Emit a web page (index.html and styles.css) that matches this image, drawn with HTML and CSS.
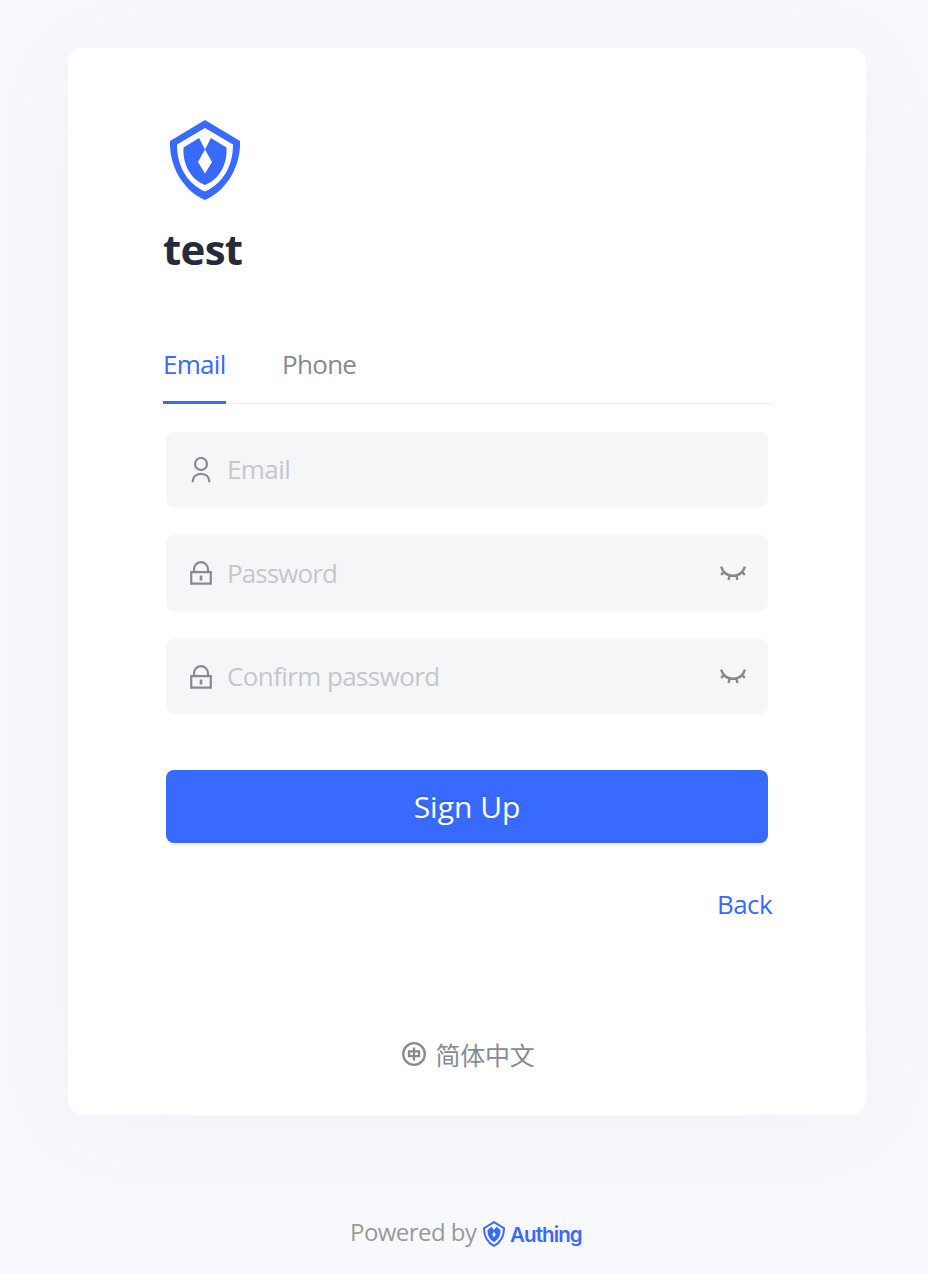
FILE: index.html
```html
<!DOCTYPE html>
<html lang="en">
<head>
<meta charset="utf-8">
<title>test</title>
<link rel="stylesheet" href="styles.css">
</head>
<body>
<svg class="sprite" aria-hidden="true">
  <symbol id="shield" viewBox="0 0 70 80">
    <path fill="currentColor" fill-rule="evenodd" d="M35 0 70 21C71 47 56 71 35 80 14 71-1 47 0 21ZM35 8 7 24.500C7 46 17 63.500 35 71.500 53 63.500 63 46 63 24.500Z"/>
    <path fill="currentColor" fill-rule="evenodd" d="M13.500 27.500 29 18 35 29.500 41 18 56.500 27.500C57.500 45 49 59.500 35 65 21 59.500 12.500 45 13.500 27.500ZM35 29.500 28 42 35 53.500 42 42Z"/>
  </symbol>
  <symbol id="lock" viewBox="0 0 22 24">
    <path fill="none" stroke="currentColor" stroke-width="2.200" d="M1.200 11.200H20.800V22.700H1.200ZM4 11V8.200A7 7 0 0 1 18 8.200V11"/>
    <path fill="none" stroke="currentColor" stroke-width="2.600" d="M11 14.500V19.500"/>
  </symbol>
  <symbol id="eye" viewBox="0 0 26 15">
    <path fill="none" stroke="currentColor" stroke-width="2.400" d="M1.100 0.700C3 6.800 7.500 9.700 13 9.700S23 6.800 24.900 .7M4 5.500 1.200 9M9.500 9.500 8.600 14M16.500 9.500 17.400 14M22 5.500 24.800 9"/>
  </symbol>
</svg>
<main class="card">
  <svg class="logo"><use href="#shield"/></svg>
  <h1 class="title">test</h1>
  <nav class="tabs">
    <a class="tab tab-active">Email</a>
    <a class="tab tab-phone">Phone</a>
  </nav>
  <form class="form">
    <div class="field">
      <svg class="icon user" viewBox="0 0 22 26"><g fill="none" stroke="currentColor" stroke-width="2.200"><circle cx="11" cy="7" r="6"/><path d="M2.600 25.300C2.600 20 6 16.800 11 16.800S19.400 20 19.400 25.300"/></g></svg>
      <span class="hint hint-email">Email</span>
    </div>
    <div class="field field-tall">
      <svg class="icon"><use href="#lock"/></svg>
      <span class="hint hint-password">Password</span>
      <svg class="eye"><use href="#eye"/></svg>
    </div>
    <div class="field">
      <svg class="icon"><use href="#lock"/></svg>
      <span class="hint hint-confirm">Confirm password</span>
      <svg class="eye"><use href="#eye"/></svg>
    </div>
    <button class="submit" type="button"><span class="submit-text">Sign Up</span></button>
  </form>
  <div class="back"><a class="back-link">Back</a></div>
  <div class="language">
    <svg class="globe" viewBox="0 0 24 24" fill="none" stroke="currentColor" stroke-width="2.300"><circle cx="12" cy="12" r="10.800"/><path d="M7 9.300H17V14.200H7ZM12 5.500V18.500"/></svg>
    <span class="language-name">简体中文</span>
  </div>
</main>
<footer class="footer">
  <span class="powered">Powered by</span>
  <svg class="brand-logo" viewBox="0 0 22 26">
    <path fill="none" stroke="currentColor" stroke-width="2" d="M11 1.200 21 7.200C21 15.500 17 21.800 11 24.800 5 21.800 1 15.500 1 7.200Z"/>
    <path fill="currentColor" fill-rule="evenodd" d="M4.500 9 8.500 5.800 11 9 13.500 5.800 17.500 9C17.800 14.500 15 19 11 21 7 19 4.200 14.500 4.500 9ZM11 10.500 9.300 13.500 11 16.500 12.700 13.500Z"/>
  </svg>
  <span class="brand">Authing</span>
</footer>
</body>
</html>
```
FILE: styles.css
```css
* { box-sizing: border-box; }
body {
  margin: 0;
  height: 1274px;
  padding: 48px 62px 0 68px;
  overflow: hidden;
  background: #f8f9ff;
  font-family: "Open Sans", "Noto Sans CJK SC", sans-serif;
  font-size: 26px;
  color: #878a95;
}
.sprite { display: none; }
.card {
  display: flex;
  flex-direction: column;
  height: 1067px;
  padding: 72px 94px 0 95px;
  border-radius: 15px;
  background: #fff;
  box-shadow: 0 8px 100px rgba(50, 60, 40, .045);
}
.logo { display: block; width: 70px; height: 80px; margin-left: 7px; color: #396aff; }
.title {
  margin: 0;
  height: 126px;
  line-height: 98px;
  font-size: 42px;
  font-weight: 700;
  letter-spacing: -.7px;
  color: #262b3b;
}
.tabs { display: flex; gap: 56px; height: 78px; border-bottom: 1px solid #eee; }
.tab { height: 78px; line-height: 77px; letter-spacing: -.7px; white-space: nowrap; }
.tab-active { width: 63px; color: #396aff; border-bottom: 3px solid #396aff; }
.form { display: flex; flex-direction: column; gap: 28px; padding: 28px 4px 0 3px; }
.field {
  display: flex;
  align-items: center;
  height: 75px;
  padding: 0 22px 0 24px;
  border-radius: 8px;
  background: #f5f6f8;
}
.field-tall { height: 76px; }
.icon { width: 22px; height: 24px; margin-right: 15px; color: #878a95; }
.user { height: 26px; }
.hint { color: #c5c7cb; line-height: 75px; letter-spacing: -.6px; white-space: nowrap; }
.hint-password { letter-spacing: -.9px; }
.eye { width: 26px; height: 15px; margin-left: auto; color: #88898c; }
.submit {
  height: 73px;
  margin-top: 28px;
  padding: 0;
  border: 0;
  border-radius: 8px;
  background: #396aff;
  box-shadow: 0 3px 0 rgba(0, 0, 0, .045);
  color: #fff;
  font: 30px/73px "Open Sans", sans-serif;
}
.submit-text { text-shadow: 0 -2px 0 rgba(0, 0, 0, .12); }
.back { height: 124px; line-height: 122px; letter-spacing: -.6px; text-align: right; color: #396aff; }
.language { display: flex; align-items: center; justify-content: center; gap: 9px; height: 50px; margin: 62px 0 0 2px; }
.globe { width: 24px; height: 24px; }
.language-name { font: 25px/50px "Noto Sans CJK SC", sans-serif; letter-spacing: -.2px; }
.footer { display: flex; align-items: center; height: 50px; margin: 93px 0 0 282px; color: #999; }
.powered { width: 133px; height: 50px; line-height: 48px; font-size: 24px; letter-spacing: -.55px; white-space: nowrap; }
.brand-logo { width: 22px; height: 26px; margin: 2px 5px 0 0; color: #396aff; }
.brand { padding-top: 3px; font: 600 20.5px/30px Inter, sans-serif; letter-spacing: -.9px; color: #396aff; }
```
